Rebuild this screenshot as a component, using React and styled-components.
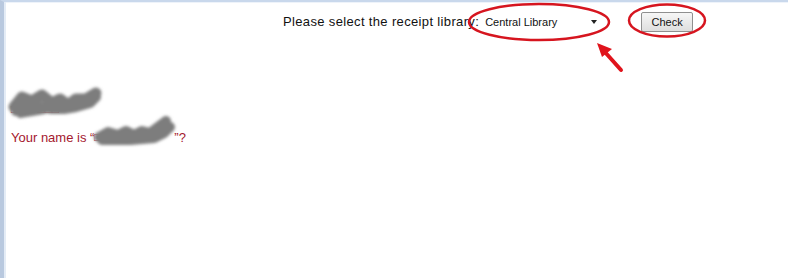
import React from 'react';
import styled, { createGlobalStyle } from 'styled-components';

const GlobalStyle = createGlobalStyle`
  html, body {
    margin: 0;
    padding: 0;
    background: #fff;
  }
  body {
    font-family: "Liberation Sans", Arial, sans-serif;
  }
`;

const Page = styled.div`
  position: relative;
  width: 788px;
  height: 278px;
  box-sizing: border-box;
  border-top: 2px solid #c9d8ec;
  border-left: 4px solid #b9c9df;
  box-shadow: inset 2px 0 0 #e4ecf6, inset 0 1px 0 #eef3fa;
  overflow: hidden;
`;

const Toolbar = styled.div`
  display: flex;
  align-items: center;
  padding: 9px 0 0 279px;
  height: 21px;
`;

const Label = styled.span`
  font-size: 13px;
  color: #111;
  letter-spacing: 0.35px;
`;

const Select = styled.div`
  display: flex;
  align-items: center;
  justify-content: space-between;
  width: 124px;
  height: 19px;
  box-sizing: border-box;
  margin-left: 2px;
  padding: 0 8px 0 4px;
  font-size: 11px;
  color: #111;
  background: #fff;
`;

const Caret = styled.span`
  width: 0;
  height: 0;
  border-left: 3px solid transparent;
  border-right: 3px solid transparent;
  border-top: 4px solid #222;
`;

const Button = styled.button`
  margin-left: 36px;
  width: 52px;
  height: 20px;
  padding: 0;
  font-family: "Liberation Sans", Arial, sans-serif;
  font-size: 11px;
  color: #111;
  border: 1px solid #8f8f8f;
  border-radius: 2px;
  background: linear-gradient(#f6f6f6, #dedede);
`;

const Result = styled.div`
  padding: 60px 0 0 7px;
  color: #a5182e;
  font-size: 13px;
`;

const Line = styled.div`
  height: ${({ $h }) => $h}px;
  display: flex;
  align-items: center;
`;

const Redacted = styled.span`
  position: relative;
  display: inline-block;
  width: ${({ $w }) => $w}px;
  color: #b01a2e;
  font-size: 12px;
`;

const Smudge = styled.svg`
  position: absolute;
  left: ${({ $x }) => $x}px;
  top: ${({ $y }) => $y}px;
  overflow: visible;
`;

const Overlay = styled.svg`
  position: absolute;
  left: -4px;
  top: -2px;
  pointer-events: none;
`;

function Blur({ id, x, y, w, h, strokes }) {
  return (
    <Smudge $x={x} $y={y} width={w} height={h}>
      <defs>
        <filter id={id} x="-20%" y="-40%" width="140%" height="180%">
          <feGaussianBlur stdDeviation="1.4" />
        </filter>
      </defs>
      <g filter={`url(#${id})`} fill="none" stroke="#7d7d7d" strokeLinecap="round" strokeLinejoin="round">
        {strokes.map((s, i) => (
          <polyline key={i} points={s.p} strokeWidth={s.w} />
        ))}
      </g>
    </Smudge>
  );
}

export default function App() {
  return (
    <>
      <GlobalStyle />
      <Page>
        <Toolbar>
          <Label>Please select the receipt library:</Label>
          <Select>
            Central Library
            <Caret />
          </Select>
          <Button>Check</Button>
        </Toolbar>
        <Result>
          <Line $h={34}>
            <Redacted $w={88}>
              □□　□□□
              <Blur
                id="b1"
                x={-1}
                y={-14}
                w={92}
                h={30}
                strokes={[
                  { w: 11, p: '4,20 12,10 22,14 32,8 42,16 50,12 58,18 66,12 76,12 86,6' },
                  { w: 10, p: '6,24 18,20 30,20 42,22 54,22 66,20 80,16 86,10' },
                  { w: 6, p: '10,28 22,26 34,24' },
                ]}
              />
            </Redacted>
          </Line>
          <Line $h={22}>
            Your name is “
            <Redacted $w={80}>
              □□　□□
              <Blur
                id="b2"
                x={2}
                y={-8}
                w={78}
                h={26}
                strokes={[
                  { w: 10, p: '3,16 12,11 22,14 30,10 38,14 46,10 54,12 62,6 70,0' },
                  { w: 10, p: '6,19 20,19 34,19 46,18 58,17 68,12 74,6' },
                ]}
              />
            </Redacted>
            ”?
          </Line>
        </Result>
        <Overlay width="788" height="278" viewBox="0 0 788 278">
          <ellipse cx="539" cy="22" rx="70" ry="18" fill="none" stroke="#d6151f" strokeWidth="2.5" />
          <ellipse cx="667" cy="20.5" rx="38" ry="16" fill="none" stroke="#d6151f" strokeWidth="2.5" />
          <line x1="621" y1="70" x2="604" y2="51" stroke="#e0141c" strokeWidth="4" strokeLinecap="round" />
          <polygon points="597,43 612,49 602,57" fill="#e0141c" />
        </Overlay>
      </Page>
    </>
  );
}
